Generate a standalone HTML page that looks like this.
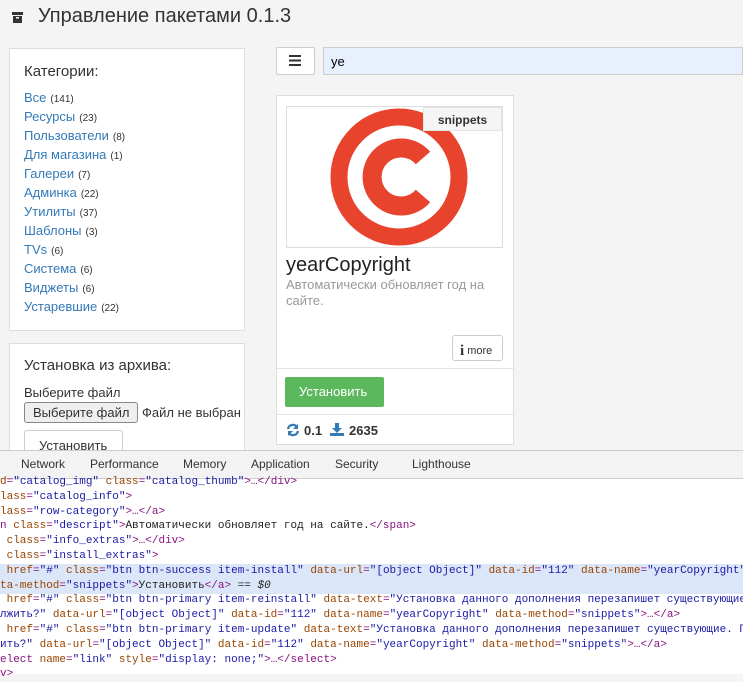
<!DOCTYPE html>
<html><head><meta charset="utf-8"><style>
*{box-sizing:border-box;margin:0;padding:0}
body{width:743px;height:674px;overflow:hidden;background:#f4f4f4;font-family:"Liberation Sans",sans-serif;position:relative;color:#333}
.abs{position:absolute}
.panel{position:absolute;background:#fff;border:1px solid #ddd}
a{color:#337ab7;text-decoration:none}
.cat{position:absolute;left:24px;font-size:13px;white-space:nowrap}
.cat small{font-size:10px;color:#333;margin-left:4px}
.dt{position:absolute;left:0;top:450px;width:743px;height:224px;background:#fff;border-top:1px solid #ccc}
.tabs{position:absolute;left:0;top:0;width:743px;height:28px;background:#f3f3f3;border-bottom:1px solid #ccc;font-size:12px;color:#333}
.tabs span{position:absolute;top:6px}
.code{position:absolute;left:0;font-family:"Liberation Mono",monospace;font-size:11px;white-space:pre;color:#881280;line-height:14.8px}
.an{color:#994500}.av{color:#1a1aa6}.tx{color:#222}
</style></head><body>
<svg class="abs" style="left:12px;top:12px" width="11" height="11" viewBox="0 0 11 11"><rect x="0" y="0" width="11" height="3" fill="#333"/><rect x="1" y="4" width="9" height="7" fill="#333"/><rect x="4" y="5" width="3" height="1.5" fill="#fff"/></svg>
<div class="abs" style="left:38px;top:5px;font-size:20px;color:#333">Управление пакетами 0.1.3</div>

<div class="panel" style="left:9px;top:48px;width:236px;height:283px"></div>
<div class="abs" style="left:24px;top:63px;font-size:15px">Категории:</div>
<div class="cat" style="top:90px"><a>Все</a><small>(141)</small></div>
<div class="cat" style="top:109px"><a>Ресурсы</a><small>(23)</small></div>
<div class="cat" style="top:128px"><a>Пользователи</a><small>(8)</small></div>
<div class="cat" style="top:147px"><a>Для магазина</a><small>(1)</small></div>
<div class="cat" style="top:166px"><a>Галереи</a><small>(7)</small></div>
<div class="cat" style="top:185px"><a>Админка</a><small>(22)</small></div>
<div class="cat" style="top:204px"><a>Утилиты</a><small>(37)</small></div>
<div class="cat" style="top:223px"><a>Шаблоны</a><small>(3)</small></div>
<div class="cat" style="top:242px"><a>TVs</a><small>(6)</small></div>
<div class="cat" style="top:261px"><a>Система</a><small>(6)</small></div>
<div class="cat" style="top:280px"><a>Виджеты</a><small>(6)</small></div>
<div class="cat" style="top:299px"><a>Устаревшие</a><small>(22)</small></div>

<div class="panel" style="left:9px;top:343px;width:236px;height:120px"></div>
<div class="abs" style="left:24px;top:357px;font-size:15px">Установка из архива:</div>
<div class="abs" style="left:24px;top:385px;font-size:13px">Выберите файл</div>
<div class="abs" style="left:24px;top:402px;width:114px;height:21px;background:#efefef;border:1px solid #888;border-radius:3px;font-size:13px;padding:2px 0 0 8px">Выберите файл</div>
<div class="abs" style="left:142px;top:405px;font-size:13px;white-space:nowrap">Файл не выбран</div>
<div class="abs" style="left:24px;top:430px;width:99px;height:30px;background:#fff;border:1px solid #ccc;border-radius:3px;font-size:13px;padding:7px 0 0 14px">Установить</div>

<div class="abs" style="left:276px;top:47px;width:39px;height:28px;background:#fff;border:1px solid #ccc;border-radius:2px"></div>
<svg class="abs" style="left:289px;top:55px" width="12" height="11"><rect y="0" width="12" height="2" fill="#333"/><rect y="4.5" width="12" height="2" fill="#333"/><rect y="9" width="12" height="2" fill="#333"/></svg>
<div class="abs" style="left:323px;top:47px;width:420px;height:28px;background:#e8f0fe;border:1px solid #ccc;font-size:13px;padding:6px 0 0 7px;color:#000">ye</div>

<div class="panel" style="left:276px;top:95px;width:238px;height:350px"></div>
<div class="abs" style="left:286px;top:106px;width:217px;height:142px;border:1px solid #ddd;background:#fff"></div>
<svg class="abs" style="left:330px;top:108px" width="138" height="138" viewBox="0 0 138 138"><circle cx="69" cy="69" r="60" fill="none" stroke="#e8432d" stroke-width="17"/><path d="M93 50 A29 29 0 1 0 93 88" fill="none" stroke="#e8432d" stroke-width="19"/></svg>
<div class="abs" style="left:423px;top:107px;width:79px;height:24px;background:#f5f5f5;border:1px solid #e4e4e4;font-size:12px;font-weight:bold;text-align:center;padding-top:5px">snippets</div>
<div class="abs" style="left:286px;top:254px;font-size:20px;color:#222">yearCopyright</div>
<div class="abs" style="left:286px;top:277px;width:220px;font-size:13px;color:#999;line-height:16px">Автоматически обновляет год на сайте.</div>
<div class="abs" style="left:452px;top:335px;width:51px;height:26px;background:#fff;border:1px solid #ccc;border-radius:3px;font-size:11px;padding:6px 0 0 7px"><b style="font-family:'Liberation Serif',serif;font-size:15px;position:relative;top:1px">i</b> more</div>
<div class="abs" style="left:277px;top:368px;width:236px;height:1px;background:#e5e5e5"></div>
<div class="abs" style="left:285px;top:377px;width:99px;height:30px;background:#5cb85c;border-radius:2px;color:#fff;font-size:13px;padding:7px 0 0 14px">Установить</div>
<div class="abs" style="left:277px;top:414px;width:236px;height:1px;background:#e5e5e5"></div>
<svg class="abs" style="left:286px;top:423px" width="14" height="14" viewBox="0 0 14 14"><path d="M2 6 A5 5 0 0 1 11 4" fill="none" stroke="#337ab7" stroke-width="2.2"/><path d="M12 1 L12 6 L7 6 Z" fill="#337ab7"/><path d="M12 8 A5 5 0 0 1 3 10" fill="none" stroke="#337ab7" stroke-width="2.2"/><path d="M2 13 L2 8 L7 8 Z" fill="#337ab7"/></svg>
<div class="abs" style="left:304px;top:423px;font-size:13px;font-weight:bold">0.1</div>
<svg class="abs" style="left:330px;top:422px" width="14" height="14" viewBox="0 0 14 14"><path d="M5 1 H9 V6 H12 L7 11 L2 6 H5 Z" fill="#337ab7"/><rect x="0" y="11" width="14" height="3" fill="#337ab7"/></svg>
<div class="abs" style="left:349px;top:423px;font-size:13px;font-weight:bold">2635</div>

<div class="dt">
<div class="tabs"><span style="left:21px">Network</span><span style="left:90px">Performance</span><span style="left:183px">Memory</span><span style="left:251px">Application</span><span style="left:335px">Security</span><span style="left:412px">Lighthouse</span></div>
<div class="abs" style="left:0;top:113px;width:743px;height:30px;background:#dbe7f9"></div>
<div class="code" style="top:24px"><span class="an">d</span>=<span class="av">"catalog_img"</span> <span class="an">class</span>=<span class="av">"catalog_thumb"</span>&gt;…&lt;/div&gt;
<span class="an">lass</span>=<span class="av">"catalog_info"</span>&gt;
<span class="an">lass</span>=<span class="av">"row-category"</span>&gt;…&lt;/a&gt;
n <span class="an">class</span>=<span class="av">"descript"</span>&gt;<span class="tx">Автоматически обновляет год на сайте.</span>&lt;/span&gt;
 <span class="an">class</span>=<span class="av">"info_extras"</span>&gt;…&lt;/div&gt;
 <span class="an">class</span>=<span class="av">"install_extras"</span>&gt;
 <span class="an">href</span>=<span class="av">"#"</span> <span class="an">class</span>=<span class="av">"btn btn-success item-install"</span> <span class="an">data-url</span>=<span class="av">"[object Object]"</span> <span class="an">data-id</span>=<span class="av">"112"</span> <span class="an">data-name</span>=<span class="av">"yearCopyright"</span>
<span class="an">ta-method</span>=<span class="av">"snippets"</span>&gt;<span class="tx">Установить</span>&lt;/a&gt; <span class="tx">== <i>$0</i></span>
 <span class="an">href</span>=<span class="av">"#"</span> <span class="an">class</span>=<span class="av">"btn btn-primary item-reinstall"</span> <span class="an">data-text</span>=<span class="av">"Установка данного дополнения перезапишет существующие</span>
<span class="av">лжить?"</span> <span class="an">data-url</span>=<span class="av">"[object Object]"</span> <span class="an">data-id</span>=<span class="av">"112"</span> <span class="an">data-name</span>=<span class="av">"yearCopyright"</span> <span class="an">data-method</span>=<span class="av">"snippets"</span>&gt;…&lt;/a&gt;
 <span class="an">href</span>=<span class="av">"#"</span> <span class="an">class</span>=<span class="av">"btn btn-primary item-update"</span> <span class="an">data-text</span>=<span class="av">"Установка данного дополнения перезапишет существующие. П</span>
<span class="av">ить?"</span> <span class="an">data-url</span>=<span class="av">"[object Object]"</span> <span class="an">data-id</span>=<span class="av">"112"</span> <span class="an">data-name</span>=<span class="av">"yearCopyright"</span> <span class="an">data-method</span>=<span class="av">"snippets"</span>&gt;…&lt;/a&gt;
elect <span class="an">name</span>=<span class="av">"link"</span> <span class="an">style</span>=<span class="av">"display: none;"</span>&gt;…&lt;/select&gt;
v&gt;</div>
</div>
</body></html>
